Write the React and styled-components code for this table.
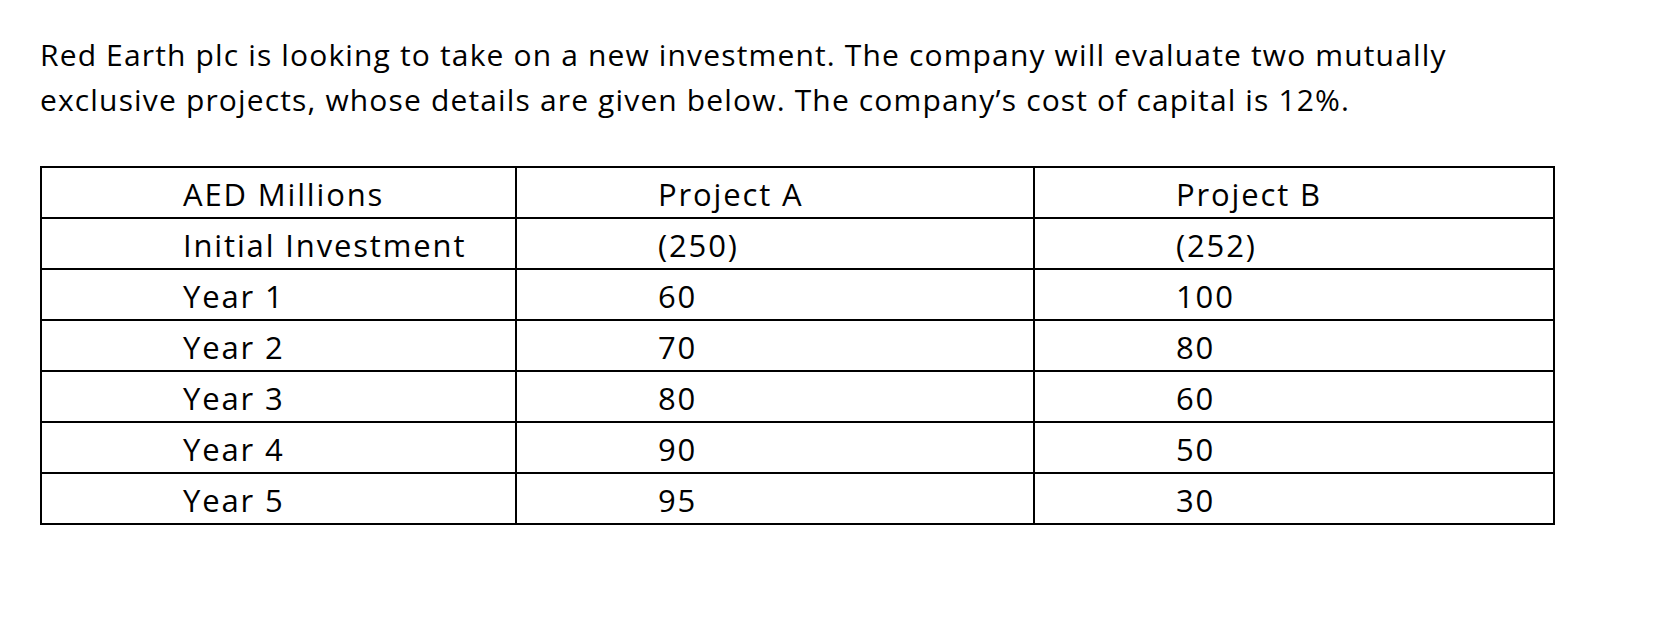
import React from "react"
import styled, { createGlobalStyle } from "styled-components"

const GlobalStyle = createGlobalStyle`
  html, body {
    margin: 0;
    padding: 0;
    background: #fff;
  }
`

const Page = styled.div`
  padding: 33px 0 0 40px;
  font-family: "Open Sans", Lato, sans-serif;
  color: #000;
`

const Intro = styled.p`
  margin: 0;
  font-size: 30px;
  line-height: 44.5px;
  letter-spacing: 1.15px;
  white-space: nowrap;
`

const Grid = styled.table`
  margin-top: 44px;
  border-collapse: collapse;
  table-layout: fixed;
  width: 1513px;
`

const Col = styled.col`
  width: ${({ $w }) => $w}px;
`

const Cell = styled.td`
  padding: 3px 0 0 141px;
  border: 2px solid #000;
  vertical-align: top;
  font-size: 31px;
  line-height: 46px;
  letter-spacing: 1.85px;
  white-space: nowrap;
`

const rows = [
  ["AED Millions", "Project A", "Project B"],
  ["Initial Investment", "(250)", "(252)"],
  ["Year 1", "60", "100"],
  ["Year 2", "70", "80"],
  ["Year 3", "80", "60"],
  ["Year 4", "90", "50"],
  ["Year 5", "95", "30"],
]

const App = () => {
  return (
    <Page>
      <GlobalStyle />
      <Intro>
        Red Earth plc is looking to take on a new investment. The company will evaluate two mutually
        <br />
        exclusive projects, whose details are given below. The company’s cost of capital is 12%.
      </Intro>
      <Grid>
        <colgroup>
          <Col $w={475} />
          <Col $w={518} />
          <Col $w={520} />
        </colgroup>
        <tbody>
          {rows.map((row) => (
            <tr key={row[0]}>
              {row.map((value, i) => (
                <Cell key={i}>{value}</Cell>
              ))}
            </tr>
          ))}
        </tbody>
      </Grid>
    </Page>
  )
}

export default App
